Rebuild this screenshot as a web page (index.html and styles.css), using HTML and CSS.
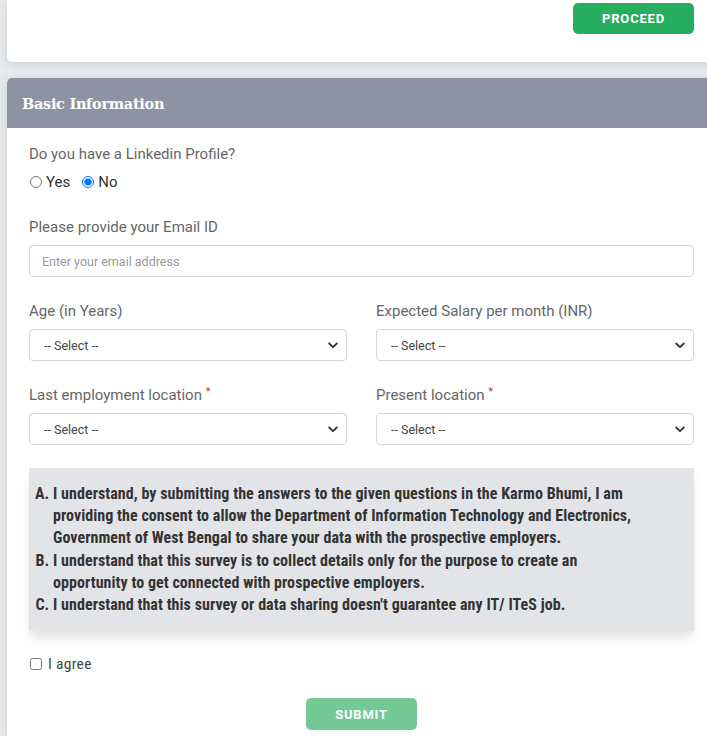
FILE: index.html
```html
<!DOCTYPE html>
<html lang="en">
<head>
<meta charset="utf-8">
<title>Basic Information</title>
<link rel="stylesheet" href="styles.css">
</head>
<body>
<div class="page">
  <div class="card top-card">
    <button class="btn btn-proceed" type="button">PROCEED</button>
  </div>

  <div class="card info-card">
    <div class="card-header">Basic Information</div>
    <div class="card-body">
      <div class="group">
        <div class="label">Do you have a Linkedin Profile?</div>
        <div class="radios">
          <label class="radio"><input type="radio" name="li"> Yes</label>
          <label class="radio"><input type="radio" name="li" checked> No</label>
        </div>
      </div>

      <div class="group">
        <div class="label">Please provide your Email ID</div>
        <input class="control" type="text" placeholder="Enter your email address">
      </div>

      <div class="row">
        <div class="group">
          <div class="label">Age (in Years)</div>
          <div class="select-wrap">
            <select class="control select"><option>-- Select --</option></select>
            <svg class="chev" width="10" height="7" viewBox="0 0 10 7"><path d="M1.2 1.5 5 5.2l3.8-3.7" fill="none" stroke="#333" stroke-width="1.8" stroke-linecap="round" stroke-linejoin="round"/></svg>
          </div>
        </div>
        <div class="group">
          <div class="label">Expected Salary per month (INR)</div>
          <div class="select-wrap">
            <select class="control select"><option>-- Select --</option></select>
            <svg class="chev" width="10" height="7" viewBox="0 0 10 7"><path d="M1.2 1.5 5 5.2l3.8-3.7" fill="none" stroke="#333" stroke-width="1.8" stroke-linecap="round" stroke-linejoin="round"/></svg>
          </div>
        </div>
      </div>

      <div class="row">
        <div class="group">
          <div class="label">Last employment location <span class="req">*</span></div>
          <div class="select-wrap">
            <select class="control select"><option>-- Select --</option></select>
            <svg class="chev" width="10" height="7" viewBox="0 0 10 7"><path d="M1.2 1.5 5 5.2l3.8-3.7" fill="none" stroke="#333" stroke-width="1.8" stroke-linecap="round" stroke-linejoin="round"/></svg>
          </div>
        </div>
        <div class="group">
          <div class="label">Present location <span class="req">*</span></div>
          <div class="select-wrap">
            <select class="control select"><option>-- Select --</option></select>
            <svg class="chev" width="10" height="7" viewBox="0 0 10 7"><path d="M1.2 1.5 5 5.2l3.8-3.7" fill="none" stroke="#333" stroke-width="1.8" stroke-linecap="round" stroke-linejoin="round"/></svg>
          </div>
        </div>
      </div>

      <div class="consent">
        <ol>
          <li>I understand, by submitting the answers to the given questions in the Karmo Bhumi, I am<br>providing the consent to allow the Department of Information Technology and Electronics,<br>Government of West Bengal to share your data with the prospective employers.</li>
          <li>I understand that this survey is to collect details only for the purpose to create an<br>opportunity to get connected with prospective employers.</li>
          <li>I understand that this survey or data sharing doesn't guarantee any IT/ ITeS job.</li>
        </ol>
      </div>

      <label class="agree"><input type="checkbox"> I agree</label>

      <div class="submit-row">
        <button class="btn btn-submit" type="button">SUBMIT</button>
      </div>
    </div>
  </div>
</div>
</body>
</html>
```

FILE: styles.css
```css
* { box-sizing: border-box; }
html, body { margin: 0; padding: 0; }
body {
  background: #e7eaed;
  font-family: Roboto, "Liberation Sans", sans-serif;
  color: #333;
  overflow: hidden;
}
.page {
  padding-left: 7px;
  width: 720px;
}
.card {
  background: #fff;
  box-shadow: 0 2px 8px rgba(0, 0, 0, 0.12);
}
.top-card {
  height: 62px;
  border-radius: 0 0 5px 5px;
  display: flex;
  justify-content: flex-end;
  align-items: flex-start;
  padding: 3px 26px 0 0;
}
.btn {
  border: 0;
  border-radius: 5px;
  color: #fff;
  font-family: Roboto, "Liberation Sans", sans-serif;
  font-weight: 700;
  font-size: 13px;
  letter-spacing: 0.8px;
  height: 31px;
  padding: 0;
}
.btn-proceed {
  width: 121px;
  background: #26ad60;
}
.info-card {
  margin-top: 16px;
  border-radius: 5px 5px 0 0;
}
.card-header {
  height: 50px;
  background: #8e93a3;
  border-radius: 5px 5px 0 0;
  color: #fff;
  font-family: "DejaVu Serif", "Liberation Serif", serif;
  font-weight: 700;
  font-size: 14.5px;
  letter-spacing: -0.3px;
  display: flex;
  align-items: center;
  padding: 1px 0 0 15px;
}
.card-body {
  padding: 15px 26px 8px 22px;
}
.group + .group,
.row,
.row + .row { margin-top: 23px; }
.row .group + .group { margin-top: 0; }
.row {
  display: grid;
  grid-template-columns: 1fr 1fr;
  column-gap: 29px;
}
.label {
  font-size: 15px;
  line-height: 22px;
  color: #666;
  margin-bottom: 7px;
}
.req {
  color: #c0392b;
  font-size: 11px;
  vertical-align: top;
  line-height: 16px;
}
.radios {
  display: flex;
  gap: 11px;
  margin-top: -1px;
  font-size: 15px;
  line-height: 22px;
  color: #333;
}
.radio {
  display: flex;
  align-items: center;
  gap: 3px;
}
.radio input {
  margin: 0 1px 0 1px;
  width: 12px;
  height: 12px;
}
.control {
  display: block;
  width: 100%;
  height: 32px;
  border: 1px solid #d2d4d7;
  border-radius: 4px;
  background: #fff;
  font-family: Roboto, "Liberation Sans", sans-serif;
  font-size: 12.5px;
  color: #444;
  padding: 0 12px;
  outline: none;
}
.control::placeholder { color: #9a9a9a; }
.select-wrap { position: relative; }
.select {
  appearance: none;
  -webkit-appearance: none;
  padding-left: 14px;
}
.chev {
  position: absolute;
  right: 9px;
  top: 13px;
  pointer-events: none;
}
.consent {
  margin-top: 23px;
  background: #e3e4e8;
  box-shadow: 0 8px 10px -2px rgba(0, 0, 0, 0.13);
  padding: 15px 0 15px 24px;
}
.consent ol {
  margin: 0;
  padding: 0;
  list-style: upper-alpha;
  font-family: "Roboto Condensed", "Liberation Sans Narrow", "DejaVu Sans Condensed", "Arial Narrow", sans-serif;
  font-stretch: condensed;
  font-weight: 700;
  font-size: 16px;
  letter-spacing: 0.05px;
  line-height: 22.2px;
  color: #333;
  white-space: nowrap;
}
.agree {
  display: flex;
  align-items: center;
  gap: 6px;
  margin-top: 22px;
  font-family: "Roboto Condensed", "Liberation Sans Narrow", "DejaVu Sans Condensed", sans-serif;
  font-stretch: condensed;
  font-size: 15.5px;
  letter-spacing: 0.3px;
  line-height: 22px;
  color: #444;
}
.agree input {
  margin: 0 0 0 1px;
  width: 12px;
  height: 12px;
}
.submit-row {
  display: flex;
  justify-content: center;
  margin-top: 23px;
}
.btn-submit {
  width: 111px;
  height: 32px;
  background: #74c996;
}
```
